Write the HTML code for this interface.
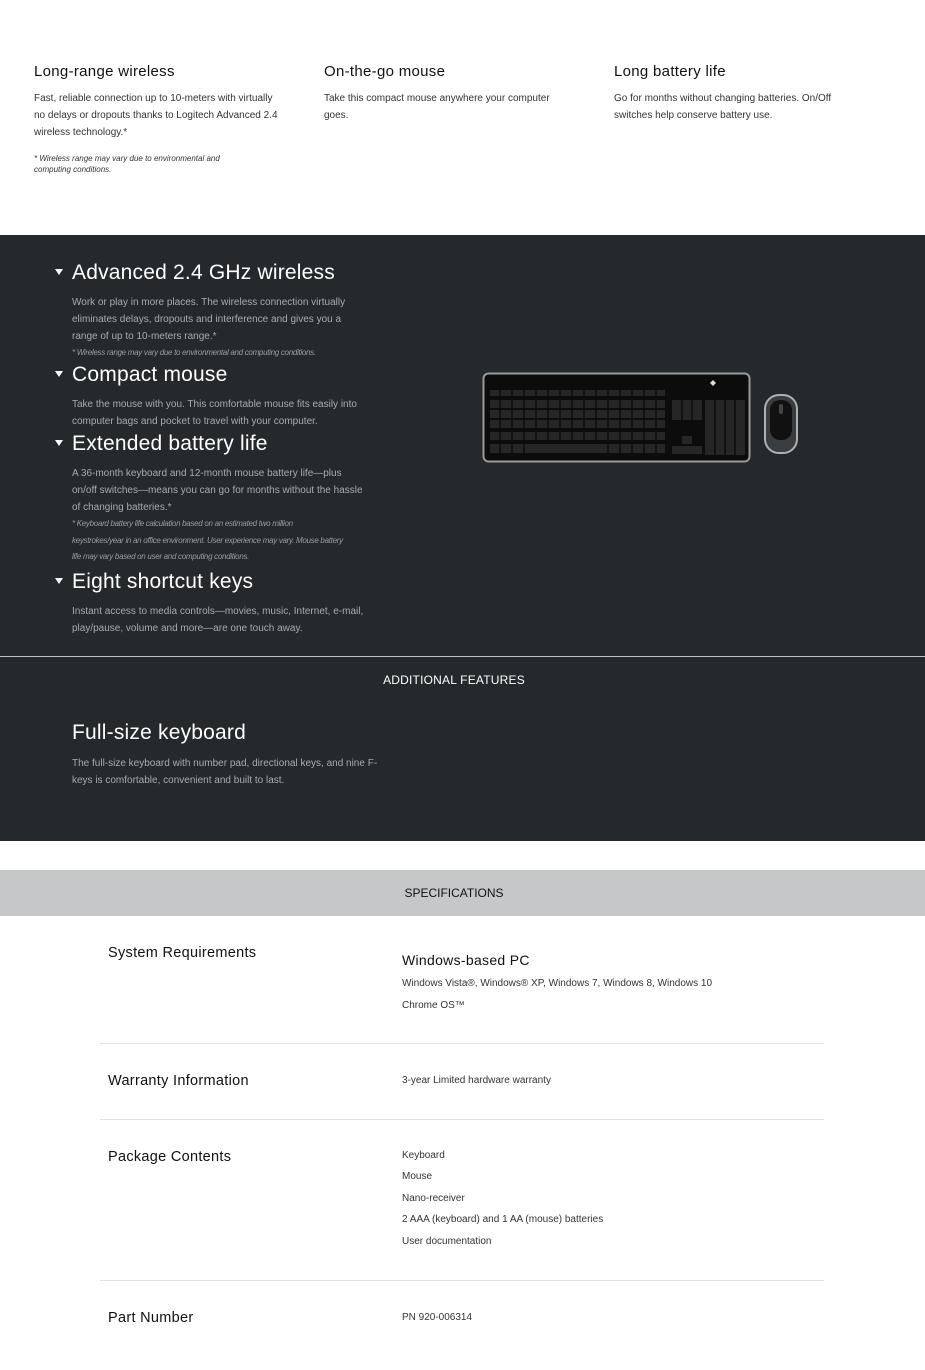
<!DOCTYPE html>
<html><head><meta charset="utf-8"><style>
*{margin:0;padding:0;box-sizing:border-box}
body{width:925px;height:1370px;position:relative;background:#fff;font-family:"Liberation Sans",sans-serif;overflow:hidden}
.a{position:absolute;white-space:nowrap}
.h3{font-size:15px;color:#111;letter-spacing:.3px}
.p{font-size:10px;line-height:17px;color:#333}
.dark{position:absolute;left:0;top:235px;width:925px;height:606px;background:#25292b}
.dh{font-size:21px;color:#fff;letter-spacing:.2px}
.dp{font-size:10px;line-height:17px;color:#a9acad}
.ds{font-size:8px;font-style:italic;color:#9a9d9e;letter-spacing:-.3px;line-height:16.5px}
.tri{position:absolute;width:0;height:0;border-left:4.5px solid transparent;border-right:4.5px solid transparent;border-top:6px solid #fff}
.sl{font-size:14.5px;color:#111;letter-spacing:.3px}
.sp{font-size:10px;color:#333}
.hr{position:absolute;left:100px;width:724px;height:1px;background:#e2e2e2}
</style></head><body>
<div class="a h3" style="left:34px;top:63px">Long-range wireless</div>
<div class="a p" style="left:34px;top:90px">Fast, reliable connection up to 10-meters with virtually<br>no delays or dropouts thanks to Logitech Advanced 2.4<br>wireless technology.*</div>
<div class="a" style="left:34px;top:153px;font-size:8px;font-style:italic;color:#333;line-height:11px">* Wireless range may vary due to environmental and<br>computing conditions.</div>
<div class="a h3" style="left:324px;top:63px">On-the-go mouse</div>
<div class="a p" style="left:324px;top:90px">Take this compact mouse anywhere your computer<br>goes.</div>
<div class="a h3" style="left:614px;top:63px">Long battery life</div>
<div class="a p" style="left:614px;top:90px">Go for months without changing batteries. On/Off<br>switches help conserve battery use.</div>

<div class="dark"></div>
<div class="tri" style="left:55px;top:269px"></div>
<div class="a dh" style="left:72px;top:261px">Advanced 2.4 GHz wireless</div>
<div class="a dp" style="left:72px;top:294px">Work or play in more places. The wireless connection virtually<br>eliminates delays, dropouts and interference and gives you a<br>range of up to 10-meters range.*</div>
<div class="a ds" style="left:72px;top:345px">* Wireless range may vary due to environmental and computing conditions.</div>
<div class="tri" style="left:55px;top:371px"></div>
<div class="a dh" style="left:72px;top:363px">Compact mouse</div>
<div class="a dp" style="left:72px;top:396px">Take the mouse with you. This comfortable mouse fits easily into<br>computer bags and pocket to travel with your computer.</div>
<div class="tri" style="left:55px;top:440px"></div>
<div class="a dh" style="left:72px;top:432px">Extended battery life</div>
<div class="a dp" style="left:72px;top:465px">A 36-month keyboard and 12-month mouse battery life—plus<br>on/off switches—means you can go for months without the hassle<br>of changing batteries.*</div>
<div class="a ds" style="left:72px;top:516px">* Keyboard battery life calculation based on an estimated two million<br>keystrokes/year in an office environment. User experience may vary. Mouse battery<br>life may vary based on user and computing conditions.</div>
<div class="tri" style="left:55px;top:578px"></div>
<div class="a dh" style="left:72px;top:570px">Eight shortcut keys</div>
<div class="a dp" style="left:72px;top:603px">Instant access to media controls—movies, music, Internet, e-mail,<br>play/pause, volume and more—are one touch away.</div>

<svg class="a" style="left:480px;top:370px" width="325" height="95">
<rect x="3.5" y="3.5" width="266" height="88" rx="5" fill="#0c0c0c" stroke="#9a9a9a" stroke-width="2"/>
<g fill="#262626">
<rect x="10" y="20" width="175" height="6"/><rect x="10" y="30" width="175" height="8"/><rect x="10" y="40" width="175" height="8"/><rect x="10" y="50" width="175" height="8"/><rect x="10" y="62" width="175" height="8"/><rect x="10" y="74" width="175" height="9"/>
<rect x="192" y="30" width="30" height="20"/><rect x="225" y="30" width="40" height="55"/><rect x="192" y="76" width="30" height="8"/><rect x="202" y="66" width="10" height="8"/>
</g>
<g stroke="#0c0c0c" stroke-width="1.5">
<path d="M20 20v63M32 20v63M44 20v63M56 20v63M68 20v63M80 20v63M92 20v63M104 20v63M116 20v63M128 20v63M140 20v63M152 20v63M164 20v63M176 20v63M235 30v55M245 30v55M255 30v55M202 30v20M212 30v20"/>
</g>
<rect x="55" y="74" width="65" height="9" fill="#262626"/>
<path d="M233 10l3 3-3 3-3-3z" fill="#ddd"/>
<rect x="285" y="25" width="32" height="58" rx="14" fill="#3a3d40" stroke="#b0b0b0" stroke-width="2"/>
<rect x="290" y="30" width="22" height="40" rx="10" fill="#111"/>
<rect x="299" y="34" width="4" height="10" rx="2" fill="#444"/>
</svg>

<div style="position:absolute;left:0;top:656px;width:925px;height:1px;background:#bfc2c3"></div>
<div class="a" style="left:0;width:908px;text-align:center;top:673px;font-size:12px;color:#fff;letter-spacing:.2px">ADDITIONAL FEATURES</div>
<div class="a dh" style="left:72px;top:721px">Full-size keyboard</div>
<div class="a dp" style="left:72px;top:755px">The full-size keyboard with number pad, directional keys, and nine F-<br>keys is comfortable, convenient and built to last.</div>

<div style="position:absolute;left:0;top:870px;width:925px;height:46px;background:#c5c7c8"></div>
<div class="a" style="left:0;width:908px;text-align:center;top:886px;font-size:12px;color:#111">SPECIFICATIONS</div>

<div class="a sl" style="left:108px;top:945px">System Requirements</div>
<div class="a sl" style="left:402px;top:952px;font-size:14px">Windows-based PC</div>
<div class="a sp" style="left:402px;top:978px">Windows Vista®, Windows® XP, Windows 7, Windows 8, Windows 10</div>
<div class="a sp" style="left:402px;top:1000px">Chrome OS™</div>
<div class="hr" style="top:1043px"></div>
<div class="a sl" style="left:108px;top:1073px">Warranty Information</div>
<div class="a sp" style="left:402px;top:1075px">3-year Limited hardware warranty</div>
<div class="hr" style="top:1119px"></div>
<div class="a sl" style="left:108px;top:1149px">Package Contents</div>
<div class="a sp" style="left:402px;top:1145px;line-height:21.4px">Keyboard<br>Mouse<br>Nano-receiver<br>2 AAA (keyboard) and 1 AA (mouse) batteries<br>User documentation</div>
<div class="hr" style="top:1280px"></div>
<div class="a sl" style="left:108px;top:1310px">Part Number</div>
<div class="a sp" style="left:402px;top:1312px">PN 920-006314</div>
</body></html>
